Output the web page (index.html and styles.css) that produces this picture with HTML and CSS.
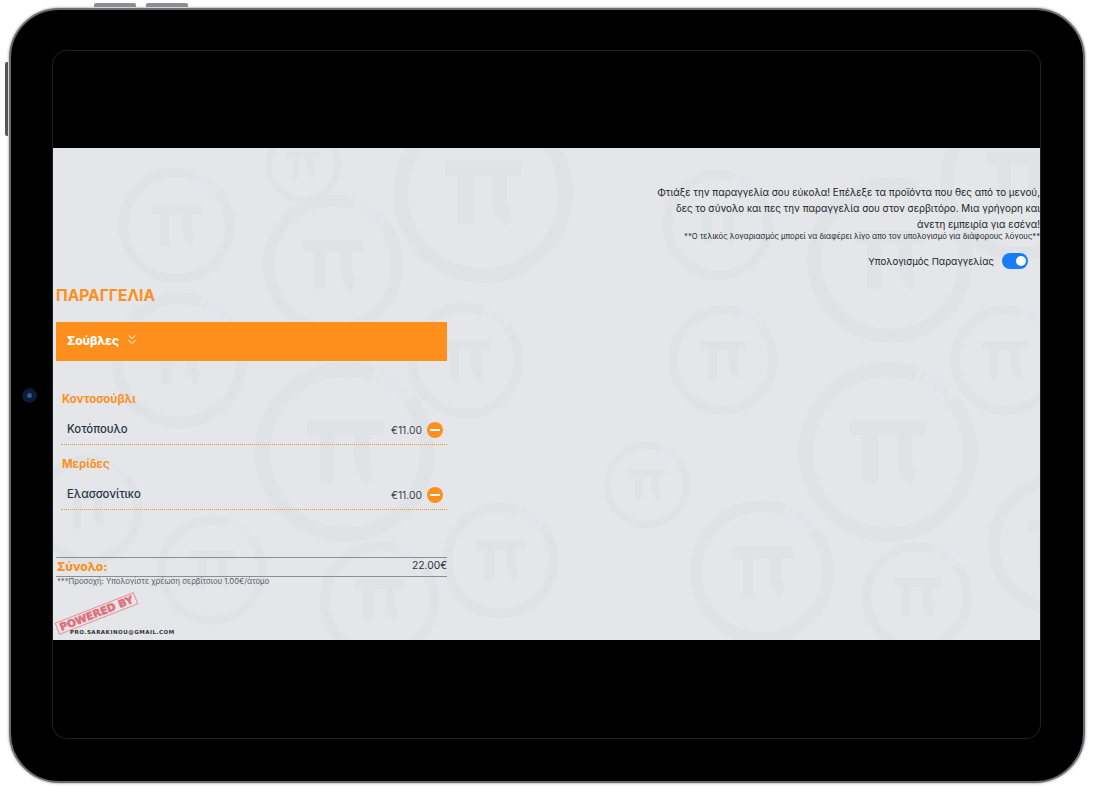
FILE: index.html
```html
<!DOCTYPE html>
<html lang="el">
<head>
  <meta charset="UTF-8" />
  <meta name="viewport" content="width=device-width, initial-scale=1" />
  <title>Παραγγελία</title>
  <link rel="stylesheet" href="styles.css">
</head>
<body>

  <div class="tablet">
    <span class="hw-btn hw-top-a"></span>
    <span class="hw-btn hw-top-b"></span>
    <span class="hw-btn hw-side"></span>
    <span class="camera"></span>

    <div class="screen">
      <div class="app">

        <!-- watermark logos, free canvas behind the content -->
        <svg class="pattern" width="987" height="492" viewBox="0 0 987 492" aria-hidden="true">
          <defs>
            <symbol id="logo" viewBox="0 0 200 200">
              <path class="logo-ring" d="M163.2 47A82.5 82.5 0 1 1 128.2 22.5" />
              <path class="logo-pi" d="M62 68H139V83H124V108L128 118L124 133Q108 125 109 100V83H90V131H75V83H62Z" />
              <text class="logo-year" x="147" y="37" transform="rotate(35 147 32)">1965</text>
            </symbol>
          </defs>
          <use href="#logo" x="59" y="13" width="129" height="129" />
          <use href="#logo" x="208" y="-25" width="84" height="84" />
          <use href="#logo" x="330" y="-55" width="200" height="200" />
          <use href="#logo" x="202" y="39" width="156" height="156" />
          <use href="#logo" x="604" y="16" width="122" height="122" />
          <use href="#logo" x="745" y="20" width="184" height="184" />
          <use href="#logo" x="878" y="-57" width="178" height="178" />
          <use href="#logo" x="51" y="137" width="151" height="151" />
          <use href="#logo" x="348" y="148" width="129" height="129" />
          <use href="#logo" x="609" y="151" width="122" height="122" />
          <use href="#logo" x="891" y="151" width="122" height="122" />
          <use href="#logo" x="192" y="204" width="200" height="200" />
          <use href="#logo" x="735" y="204" width="200" height="200" />
          <use href="#logo" x="546" y="289" width="96" height="96" />
          <use href="#logo" x="-26" y="301" width="122" height="122" />
          <use href="#logo" x="383" y="348" width="129" height="129" />
          <use href="#logo" x="98" y="361" width="122" height="122" />
          <use href="#logo" x="629" y="344" width="160" height="160" />
          <use href="#logo" x="803" y="388" width="122" height="122" />
          <use href="#logo" x="260" y="386" width="133" height="133" />
          <use href="#logo" x="927" y="319" width="156" height="156" />
        </svg>

        <div class="order">
          <h1 class="order-title">ΠΑΡΑΓΓΕΛΙΑ</h1>

          <div class="band">
            <span>Σούβλες</span>
            <svg class="chevrons" width="10" height="11" viewBox="0 0 10 11">
              <path d="M1.5 1.5L5 4.5L8.5 1.5M1.5 6L5 9.5L8.5 6" />
            </svg>
          </div>

          <div class="items">
            <h2 class="group">Κοντοσούβλι</h2>
            <div class="item">
              <span class="item-name">Κοτόπουλο</span>
              <span class="item-price">€11.00</span>
              <span class="minus"></span>
            </div>
            <h2 class="group group-next">Μερίδες</h2>
            <div class="item">
              <span class="item-name">Ελασσονίτικο</span>
              <span class="item-price">€11.00</span>
              <span class="minus"></span>
            </div>
          </div>

          <div class="total">
            <span class="total-label">Σύνολο:</span>
            <span class="total-value">22.00€</span>
          </div>
          <p class="note">***Προσοχή: Υπολογίστε χρέωση σερβίτσιου 1.00€/άτομο</p>

          <div class="credit">
            <span class="stamp">POWERED BY</span>
            <span class="email">PRO.SARAKINOU@GMAIL.COM</span>
          </div>
        </div>

        <div class="info">
          <p class="intro">Φτιάξε την παραγγελία σου εύκολα! Επέλεξε τα προϊόντα που θες από το μενού,<br>δες το σύνολο και πες την παραγγελία σου στον σερβιτόρο. Μια γρήγορη και<br>άνετη εμπειρία για εσένα!</p>
          <p class="disclaimer">**Ο τελικός λογαριασμός μπορεί να διαφέρει λίγο απο τον υπολογισμό για διάφορους λόγους**</p>
          <div class="calc">
            <span>Υπολογισμός Παραγγελίας</span>
            <span class="toggle"></span>
          </div>
        </div>

      </div>
    </div>
  </div>

</body>
</html>
```

FILE: styles.css
```css
html, body {
  margin: 0;
  padding: 0;
  background: #fff;
  font-family: Inter, "Liberation Sans", sans-serif;
}

body {
  height: 798px;
  overflow: hidden;
}

/* Device frame */
.tablet {
  position: relative;
  width: 1076px;
  height: 775px;
  margin: 8px 0 0 9px;
  padding: 41px 0 0 42px;
  box-sizing: border-box;
  background: #000;
  border: 2px solid #6c6c70;
  border-radius: 50px;
  box-shadow: 0 0 2px 1px #c4c4c8;
}

.hw-btn {
  position: absolute;
  background: #8d8d92;
}

.hw-top-a, .hw-top-b {
  top: -7px;
  width: 42px;
  height: 4px;
  border-radius: 2px 2px 0 0;
}

.hw-top-a { left: 83px; }
.hw-top-b { left: 135px; }

.hw-side {
  top: 52px;
  left: -6px;
  width: 3px;
  height: 74px;
  background: #55555a;
  border-radius: 2px 0 0 2px;
}

.camera {
  position: absolute;
  top: 378px;
  left: 11px;
  width: 15px;
  height: 15px;
  border-radius: 50%;
  background: radial-gradient(circle, #2a5a9c 0 2px, #0d1b33 3px 6px, #0a1220 8px);
}

.screen {
  width: 987px;
  height: 687px;
  padding-top: 97px;
  box-sizing: border-box;
  border-radius: 14px;
  box-shadow: 0 0 0 1px #202023;
}

/* App area */
.app {
  position: relative;
  display: flex;
  justify-content: space-between;
  height: 492px;
  overflow: hidden;
  background: #e4e6ea;
}

.pattern {
  position: absolute;
  top: 0;
  left: 0;
}

.logo-ring {
  fill: none;
  stroke: #dfe3e6;
  stroke-width: 15;
}

.logo-pi {
  fill: #dfe3e6;
}

.logo-year {
  fill: #dfe3e6;
  font-size: 14px;
  font-family: "Liberation Sans", sans-serif;
  letter-spacing: 1.5px;
  text-anchor: middle;
}

/* Left column */
.order {
  position: relative;
  width: 391px;
  margin-left: 3px;
  padding-top: 139px;
}

.order-title {
  margin: 0;
  font-size: 15.6px;
  line-height: 18px;
  font-weight: 700;
  color: #fe8f1d;
}

.band {
  display: flex;
  align-items: center;
  gap: 8px;
  height: 39px;
  margin-top: 17px;
  padding-left: 11px;
  background: #fe8f1d;
  color: #fff;
  font-size: 11.8px;
  font-weight: 800;
}

.band span {
  margin-top: -2px;
}

.chevrons {
  margin-top: -5px;
}

.chevrons path {
  fill: none;
  stroke: #fff;
  stroke-width: 1;
}

.items {
  padding: 31px 0 0 5px;
}

.group {
  margin: 0 0 0 1px;
  font-size: 11.4px;
  line-height: 15px;
  font-weight: 700;
  color: #fe8f1d;
}

.group-next {
  margin-top: 12px;
}

.item {
  display: flex;
  align-items: center;
  height: 31px;
  box-sizing: border-box;
  margin-top: 7px;
  padding: 2px 4px 0 6px;
  border-bottom: 1px dotted #fe8f1d;
  font-size: 11.3px;
}

.item-name {
  flex: 1;
  margin-top: -2px;
  font-weight: 500;
  color: #2b3340;
}

.item-price {
  margin-right: 5px;
  font-size: 10.3px;
  color: #3a4250;
}

.minus {
  position: relative;
  width: 16px;
  height: 16px;
  border-radius: 50%;
  background: #fe8f1d;
}

.minus::before {
  content: "";
  position: absolute;
  top: 7px;
  left: 3px;
  width: 10px;
  height: 2px;
  background: #fff;
}

.total {
  display: flex;
  justify-content: space-between;
  align-items: center;
  height: 18px;
  margin-top: 47px;
  border-top: 1px solid #8a8f94;
  border-bottom: 1px solid #8a8f94;
}

.total-label {
  margin: -2px 0 0 1px;
  font-size: 12px;
  font-weight: 800;
  color: #fe8f1d;
}

.total-value {
  margin-top: -4px;
  font-size: 10.3px;
  color: #2b3340;
}

.note {
  margin: 0 0 0 1px;
  font-size: 7.7px;
  line-height: 10px;
  color: #555b63;
}

/* Stamp overlaps the corner of the column */
.credit {
  position: absolute;
  left: 0;
  bottom: 0;
  width: 130px;
  height: 50px;
}

.stamp {
  position: absolute;
  left: -2px;
  top: 17px;
  width: 85px;
  height: 13px;
  box-sizing: border-box;
  border: 1.5px solid #f08a94;
  transform: rotate(-21.5deg);
  font-family: "DejaVu Sans", sans-serif;
  font-size: 10.5px;
  font-weight: 700;
  line-height: 10px;
  text-align: center;
  white-space: nowrap;
  color: #ec6f7c;
  text-shadow: 0 0 1px #a06a70;
}

.email {
  position: absolute;
  left: 14px;
  bottom: 5px;
  font-family: "DejaVu Sans", sans-serif;
  font-size: 5.5px;
  font-weight: 700;
  letter-spacing: 0.5px;
  white-space: nowrap;
  color: #333;
}

/* Right column */
.info {
  position: relative;
  padding-top: 36px;
  text-align: right;
  color: #1b1f26;
}

.intro {
  margin: 0;
  font-size: 9.83px;
  line-height: 16px;
}

.disclaimer {
  margin: 0;
  font-size: 7.7px;
  line-height: 10px;
}

.calc {
  display: flex;
  justify-content: flex-end;
  align-items: center;
  gap: 8px;
  margin-top: 11px;
  padding-right: 12px;
  font-size: 9.6px;
}

.toggle {
  position: relative;
  width: 26px;
  height: 16px;
  border-radius: 8px;
  background: #1a7cf5;
}

.toggle::after {
  content: "";
  position: absolute;
  top: 3px;
  right: 2px;
  width: 10px;
  height: 10px;
  border-radius: 50%;
  background: #fff;
}
```
